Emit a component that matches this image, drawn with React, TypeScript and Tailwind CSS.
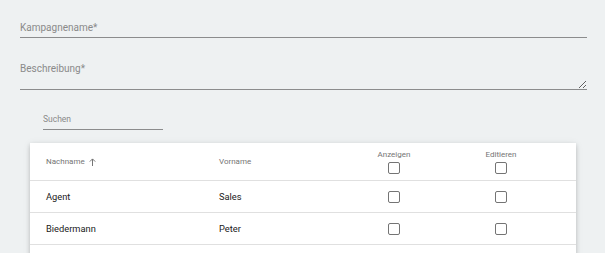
export default function App() {
  const rows = [
    { last: "Agent", first: "Sales" },
    { last: "Biedermann", first: "Peter" },
  ];

  const Box = () => (
    <span className="block w-[12px] h-[12px] border border-[#747474] rounded-[2px] bg-white" />
  );

  return (
    <div className="h-[253px] overflow-hidden bg-[#eef1f2] pl-[20px] pr-[18px] font-['Roboto',sans-serif]">
      {/* Kampagnename */}
      <div className="pt-[17px]">
        <input
          placeholder="Kampagnename*"
          className="block w-full h-[21px] bg-transparent border-b border-[#8b8c8d] text-[10px] text-[#333] placeholder:text-[#8a8a8a] outline-none"
        />
      </div>

      {/* Beschreibung */}
      <div className="mt-[20px]">
        <textarea
          placeholder="Beschreibung*"
          className="block w-full h-[32px] pt-[4px] bg-transparent border-b border-[#8b8c8d] text-[10px] leading-[14px] text-[#333] placeholder:text-[#8a8a8a] outline-none resize-y"
        />
      </div>

      {/* Suchen */}
      <div className="mt-[18px] ml-[23px] w-[120px]">
        <input
          placeholder="Suchen"
          className="block w-full h-[22px] bg-transparent border-b border-[#8b8c8d] text-[8.5px] text-[#333] placeholder:text-[#8a8a8a] outline-none"
        />
      </div>

      {/* Table */}
      <div className="mt-[13px] ml-[10px] w-[546px] bg-white shadow-[0_2px_4px_rgba(0,0,0,0.18),0_1px_8px_rgba(0,0,0,0.08)]">
        <div className="flex items-center h-[38px] pl-[16px] border-b border-[#e0e0e0] text-[8px] text-[#757575]">
          <div className="w-[173px] flex items-center gap-[4px]">
            <span>Nachname</span>
            <svg width="7" height="8" viewBox="0 0 7 8" className="text-[#757575]">
              <path d="M3.5 8V1M0.8 3.6L3.5 0.9L6.2 3.6" fill="none" stroke="currentColor" strokeWidth="1" />
            </svg>
          </div>
          <div className="w-[137px]">Vorname</div>
          <div className="w-[76px] flex flex-col items-center gap-[1px] -mt-[1px]">
            <span>Anzeigen</span>
            <Box />
          </div>
          <div className="ml-[31px] w-[76px] flex flex-col items-center gap-[1px] -mt-[1px]">
            <span>Editieren</span>
            <Box />
          </div>
        </div>
        {rows.map((r) => (
          <div
            key={r.last}
            className="flex items-center h-[32px] pl-[16px] border-b border-[#e0e0e0] text-[9.3px] text-[#212121]"
          >
            <div className="w-[173px]">{r.last}</div>
            <div className="w-[137px]">{r.first}</div>
            <div className="w-[76px] flex justify-center">
              <Box />
            </div>
            <div className="ml-[31px] w-[76px] flex justify-center">
              <Box />
            </div>
          </div>
        ))}
        <div className="h-[32px]" />
      </div>
    </div>
  );
}
